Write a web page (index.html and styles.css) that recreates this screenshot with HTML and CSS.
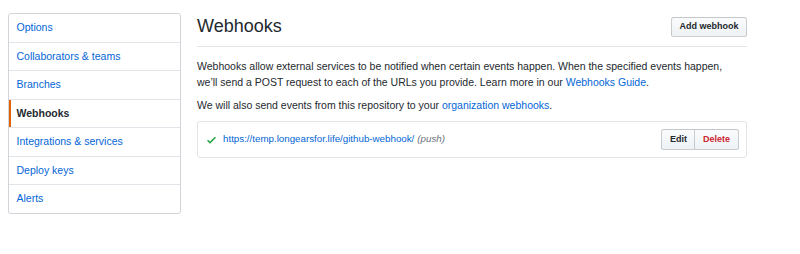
FILE: index.html
```html
<!DOCTYPE html>
<html lang="en">
<head>
  <meta charset="UTF-8">
  <title>Webhooks</title>
  <link rel="stylesheet" href="styles.css">
</head>
<body>
  <div class="page">
    <nav class="menu">
      <a class="menu-item" href="#">Options</a>
      <a class="menu-item" href="#">Collaborators &amp; teams</a>
      <a class="menu-item" href="#">Branches</a>
      <a class="menu-item selected" href="#">Webhooks</a>
      <a class="menu-item" href="#">Integrations &amp; services</a>
      <a class="menu-item" href="#">Deploy keys</a>
      <a class="menu-item" href="#">Alerts</a>
    </nav>

    <main class="content">
      <div class="subhead">
        <h2 class="subhead-heading">Webhooks</h2>
        <button class="btn btn-sm">Add webhook</button>
      </div>

      <p>Webhooks allow external services to be notified when certain events happen. When the specified events happen, we’ll send a POST request to each of the URLs you provide. Learn more in our <a href="#">Webhooks Guide</a>.</p>
      <p>We will also send events from this repository to your <a href="#">organization webhooks</a>.</p>

      <div class="hook-list">
        <div class="hook-item">
          <svg class="icon-check" viewBox="0 0 12 16">
            <path d="M12 5l-8 8-4-4 1.5-1.5L4 10l6.5-6.5L12 5z" />
          </svg>
          <a class="hook-url" href="#">https://temp.longearsfor.life/github-webhook/</a>
          <em class="hook-events">(push)</em>
          <div class="btn-group">
            <button class="btn btn-sm">Edit</button>
            <button class="btn btn-sm btn-danger">Delete</button>
          </div>
        </div>
      </div>
    </main>
  </div>
</body>
</html>
```

FILE: styles.css
```css
:root {
  --text: #24292e; --link: #0366d6; --muted: #6a737d;
  --border: #e1e4e8; --border-dark: #d1d5da;
  --orange: #e36209; --green: #28a745; --red: #cb2431;
}

* { margin: 0; padding: 0; box-sizing: border-box; }

body {
  font-family: "Liberation Sans", Arial, Helvetica, sans-serif;
  font-size: 10.5px; line-height: 1.5; color: var(--text); background: #fff;
}

a { color: var(--link); text-decoration: none; }

.page {
  display: flex; align-items: flex-start; gap: 16px;
  padding: 13px 0 0 8px;
}

/* side menu */
.menu {
  width: 173px; flex-shrink: 0; display: flex; flex-direction: column;
  border: 1px solid var(--border-dark); border-radius: 3px;
  box-shadow: 0 1px 1px rgba(27,31,35,0.06);
}
.menu-item {
  display: block; padding: 6px 7.5px; line-height: 15.5px;
  border-bottom: 1px solid var(--border);
}
.menu-item:last-child { border-bottom: none; }
.menu-item.selected {
  color: var(--text); font-weight: 700; cursor: default;
  box-shadow: inset 2px 0 0 var(--orange);
}

/* main column */
.content { width: 550px; }

.subhead {
  display: flex; align-items: center; justify-content: space-between;
  padding-bottom: 6px; margin-bottom: 12px;
  border-bottom: 1px solid var(--border);
}
.subhead-heading { font-size: 18px; font-weight: 400; line-height: 27px; }

.content p { margin-bottom: 7.5px; max-width: 535px; }

.btn {
  font-family: inherit; font-size: 9px; font-weight: 700; line-height: 13px;
  padding: 3px 7.5px; color: var(--text); cursor: pointer;
  background: linear-gradient(-180deg, #fafbfc 0%, #eff3f6 90%);
  border: 1px solid rgba(27,31,35,0.2); border-radius: 2.5px;
}
.subhead .btn { padding: 2.5px 7.5px; }
.btn-danger { color: var(--red); }

.btn-group { display: flex; margin-left: auto; }
.btn-group .btn:first-child { border-radius: 2.5px 0 0 2.5px; }
.btn-group .btn:last-child { border-radius: 0 2.5px 2.5px 0; margin-left: -1px; }

/* hooks */
.hook-list { border: 1px solid var(--border); border-radius: 3px; }
.hook-item {
  display: flex; align-items: center; padding: 7px 7.5px 7px 9px;
  font-size: 9.75px;
}
.icon-check { width: 9px; height: 12px; fill: var(--green); margin-right: 7px; }
.hook-events { color: var(--muted); margin-left: 3px; }
```
